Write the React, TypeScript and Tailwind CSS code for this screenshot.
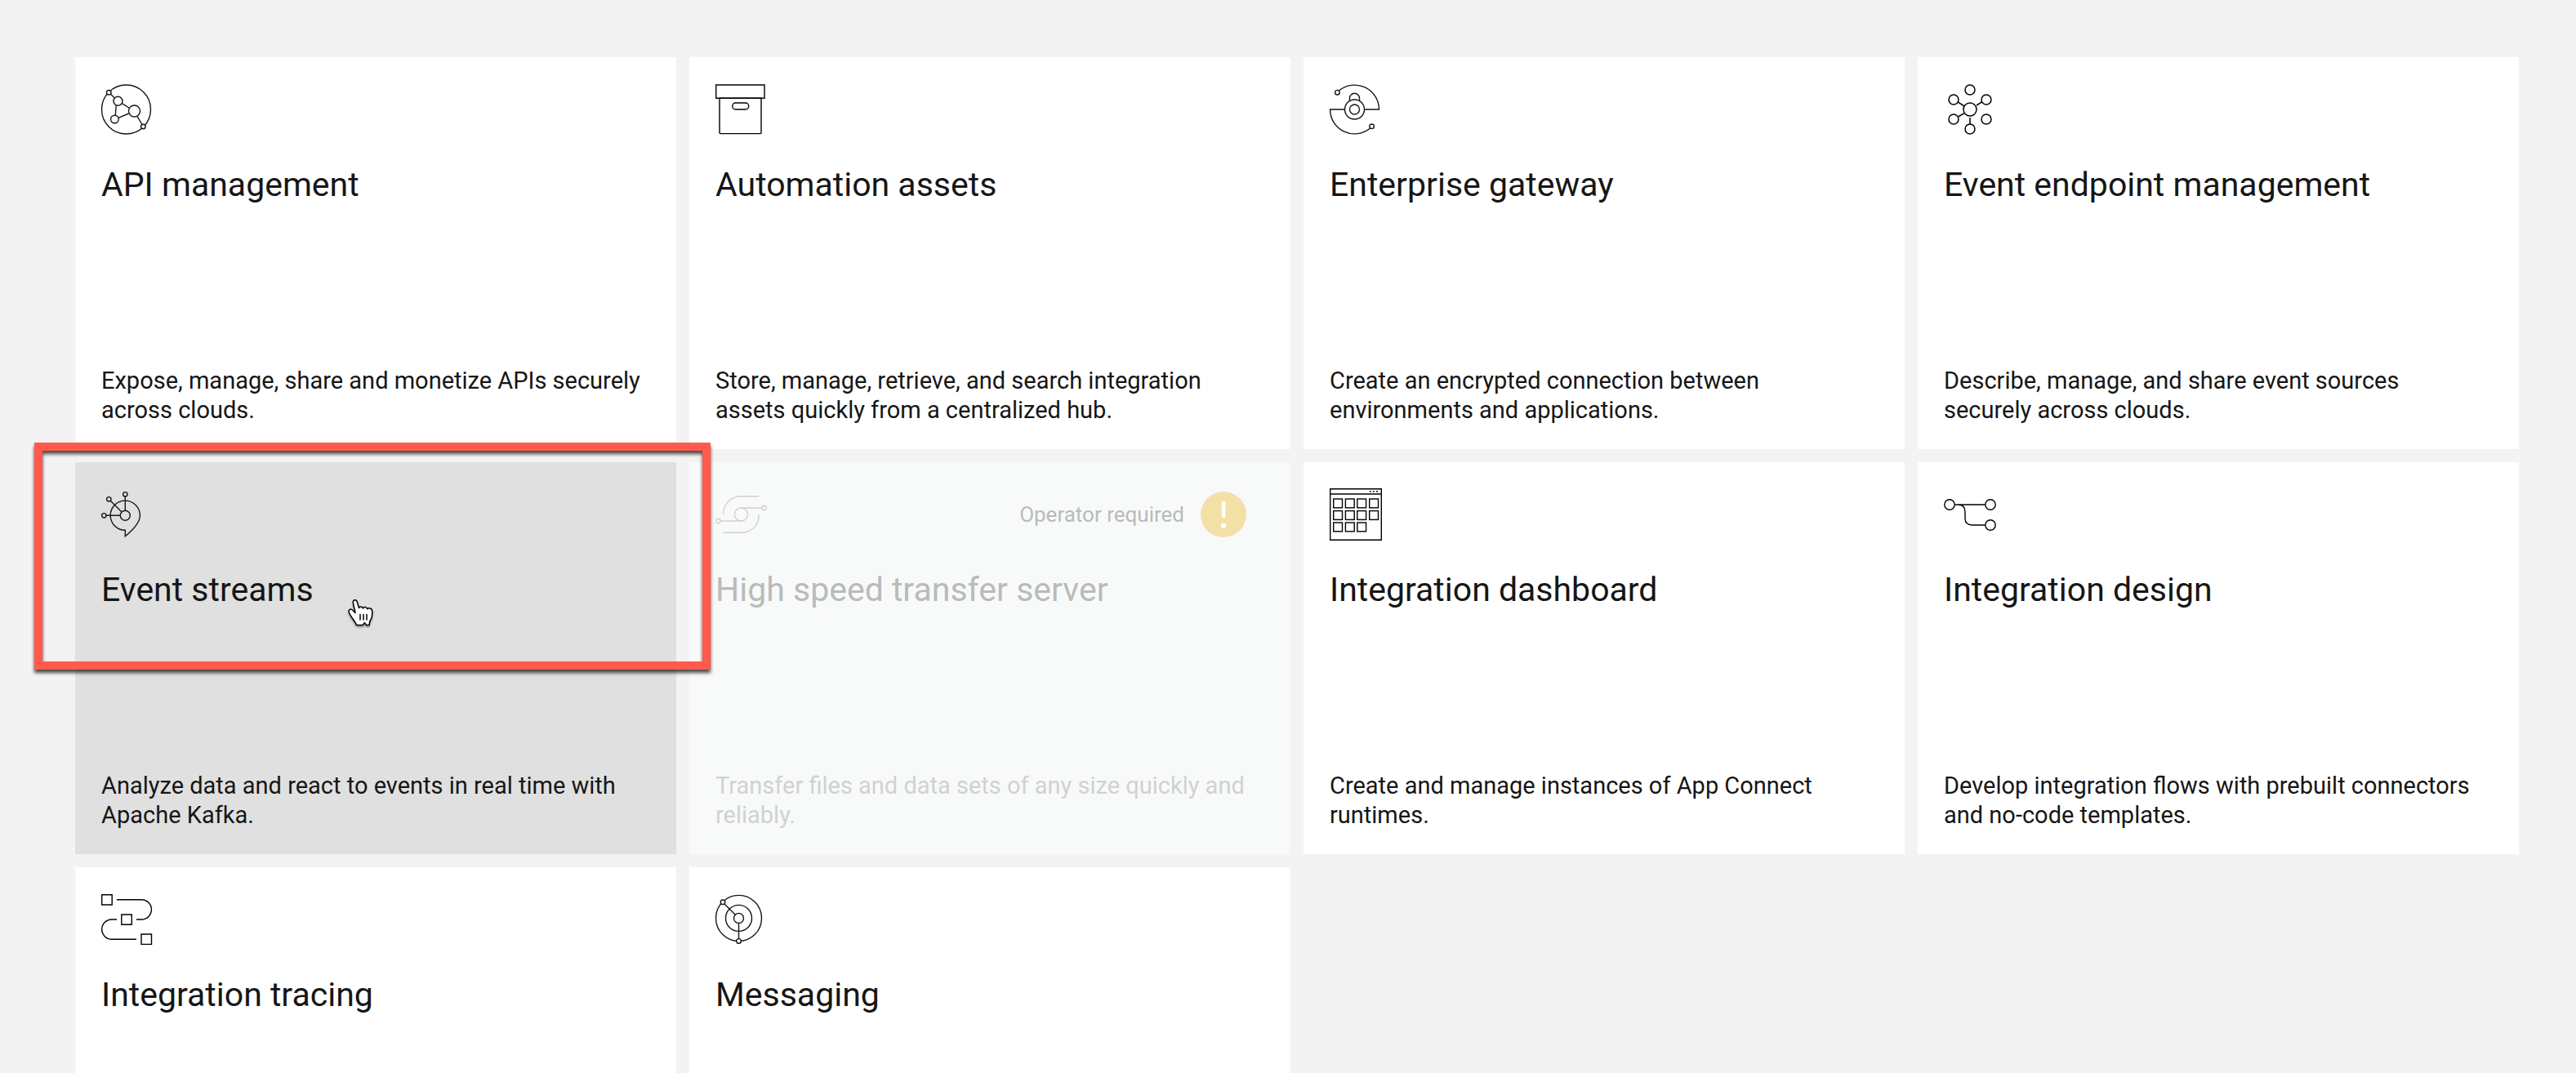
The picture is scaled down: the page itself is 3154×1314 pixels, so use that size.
import type { ReactNode } from "react";

function Icon({ children }: { children: ReactNode }) {
  return (
    <svg
      className="size-16 shrink-0 overflow-visible"
      viewBox="0 0 64 64"
      fill="none"
      stroke="currentColor"
      strokeWidth="1.4"
      aria-hidden="true"
    >
      {children}
    </svg>
  );
}

const ApiIcon = () => (
  <Icon>
    <circle cx="30.5" cy="32" r="30" />
    <path d="M11.5 13.3 16.3 18M25.3 24.7 34 30M18.2 27.3 17.3 39M21 42.3 33.6 37M44 40.3 50 50.5" />
    <g fill="#fff">
      <circle cx="9.3" cy="11.3" r="2.8" />
      <circle cx="51.3" cy="53" r="2.8" />
      <circle cx="20.5" cy="21.8" r="5.5" />
      <circle cx="40.5" cy="34" r="7" />
      <circle cx="16.4" cy="44" r="4.8" />
    </g>
  </Icon>
);

const BoxIcon = () => (
  <Icon>
    <g stroke="#000">
      <path d="M.7 2H60V18.3H.7z" />
      <path d="M5 18.3H56V60.5Q56 61.6 55 61.6H6Q5 61.6 5 60.5z" />
      <rect x="20.7" y="24" width="20" height="8" rx="4" />
    </g>
  </Icon>
);

const GatewayIcon = () => (
  <Icon>
    <path d="M11.4 9A30 30 0 0 1 60.5 32H42.5M49.6 55A30 30 0 0 1 .5 32H18.5" />
    <circle cx="9.4" cy="11.2" r="2.8" />
    <circle cx="51.6" cy="52.8" r="2.8" />
    <circle cx="30.5" cy="32" r="12" />
    <circle cx="30.5" cy="32" r="6" />
    <path d="M24.5 21.6V18.2A6 6 0 0 1 36.5 18.2V21.6" />
  </Icon>
);

const EndpointIcon = () => (
  <Icon>
    <g stroke="#000" strokeWidth="1.5">
      <circle cx="32" cy="32" r="8" />
      <circle cx="32" cy="8" r="6" />
      <circle cx="12" cy="20" r="6" />
      <circle cx="52" cy="20" r="6" />
      <circle cx="12" cy="44" r="6" />
      <circle cx="52" cy="44" r="6" />
      <circle cx="32" cy="56" r="6" />
      <path d="M17.5 23.2 25 28M40 27 47 22.7M17.5 41 25 36.6M32 42V50" />
    </g>
  </Icon>
);

const StreamsIcon = () => (
  <Icon>
    <path d="M29.3 51.3V58.8C36 53.3 47.4 42.6 47.4 33.3A18.1 18.1 0 1 0 29.3 51.3z" />
    <circle cx="29.3" cy="33.3" r="6" />
    <circle cx="29.3" cy="7.3" r="2.7" />
    <circle cx="9.3" cy="13.3" r="2.7" />
    <circle cx="3.3" cy="33.3" r="2.7" />
    <path d="M29.3 10V27.3M11.3 15.3 25 29M6 33.3H23.3" />
  </Icon>
);

const TransferIcon = () => (
  <Icon>
    <path d="M9.7 32C9.7 20 18 9.8 31 9.8H53.5M53.3 32C53.3 44 45 54.2 32 54.2H9.5" />
    <circle cx="31.4" cy="32" r="8" />
    <path d="M31.4 24H57M31.4 40H6.5" />
    <circle cx="59.6" cy="24" r="2.7" />
    <circle cx="3.4" cy="40" r="2.7" />
  </Icon>
);

const DASHBOARD_TILES = [
  [4.7, 13], [19.4, 13], [33.8, 13], [48.7, 13],
  [4.7, 27.6], [19.4, 27.6], [33.8, 27.6], [48.7, 27.6],
  [4.7, 42], [19.4, 42], [33.8, 42],
];

const DashboardIcon = () => (
  <Icon>
    <g stroke="#000">
      <path d="M.7.7H63.3V63.3H.7zM0 7H64" />
      {DASHBOARD_TILES.map(([x, y]) => (
        <rect key={`${x}-${y}`} x={x} y={y} width="10.8" height="10.8" />
      ))}
      <path d="M48.9 3.8h1.6M53 3.8h1.6M57.2 3.8h1.6" strokeWidth="1.8" />
    </g>
  </Icon>
);

const DesignIcon = () => (
  <Icon>
    <g stroke="#000">
      <circle cx="7" cy="20" r="6.2" />
      <circle cx="57" cy="20" r="6.2" />
      <circle cx="57" cy="45" r="6.2" />
      <path d="M13.3 20H50.7M17 20C23 20 26 23 26 28.5V36.5C26 42 29 45 34.5 45H50.7" />
    </g>
  </Icon>
);

const TracingIcon = () => (
  <Icon>
    <g stroke="#000">
      <path d="M.7 1.7H13.2V14H.7zM24.8 26H37.3V38.3H24.8zM49 50H61.5V62.4H49z" />
      <path d="M19 7.7H49.3A12.1 12.1 0 0 1 49.3 32H43M19 32H12.8A12.1 12.1 0 0 0 12.8 56.2H43" />
    </g>
  </Icon>
);

const MessagingIcon = () => (
  <Icon>
    <circle cx="28.5" cy="30.4" r="28" />
    <circle cx="28.5" cy="30.4" r="16" />
    <path d="M11 12.9 24.3 26.2M28.5 36.4V56" />
    <circle cx="28.5" cy="30.4" r="6" />
    <circle cx="9" cy="10.8" r="2.8" fill="#fff" />
    <circle cx="28.5" cy="58.4" r="2.8" fill="#fff" />
  </Icon>
);

const WarningIcon = () => (
  <svg className="size-16" viewBox="0 0 64 64" aria-hidden="true">
    <circle cx="32" cy="32" r="28" fill="#f4e0a6" />
    <path d="M29.8 16h4.5v20h-4.5z" fill="#fff" />
    <circle cx="32" cy="45.6" r="3.2" fill="#fff" />
  </svg>
);

function HandCursor() {
  return (
    <svg
      className="absolute left-[332px] top-[166px] h-10 w-9 drop-shadow-[0_2px_1px_rgba(0,0,0,0.35)]"
      viewBox="0 0 36 40"
      fill="#fff"
      stroke="#000"
      strokeWidth="1.5"
      strokeLinejoin="round"
      aria-hidden="true"
    >
      <path d="M12.6 33.4C11 29 6.5 25 4 19.500C1.500 15 4.800 12.500 8 15.500L11 18.500C10.500 14 8.500 9 8.300 5.500C8.300 2 12.600 2 13.300 5.200L15.500 12.500C16 10.300 20 10.300 20.500 13C21.500 10.800 25.300 11.200 25.700 13.800C27 12.200 31.500 12.600 31.700 16.500C32 22 31.500 25 29.500 27.500C28.300 29.500 28.500 31 28.200 33.400H24.600L22.300 30.600L20.300 33.400z" />
      <path d="M17 20v7.500M21 20v7.500M25 20v7.500" />
    </svg>
  );
}

type Tile = {
  title: string;
  description?: string;
  icon: ReactNode;
  state?: "hovered" | "disabled";
};

const TILES: Tile[] = [
  {
    title: "API management",
    description: "Expose, manage, share and monetize APIs securely across clouds.",
    icon: <ApiIcon />,
  },
  {
    title: "Automation assets",
    description:
      "Store, manage, retrieve, and search integration assets quickly from a centralized hub.",
    icon: <BoxIcon />,
  },
  {
    title: "Enterprise gateway",
    description: "Create an encrypted connection between environments and applications.",
    icon: <GatewayIcon />,
  },
  {
    title: "Event endpoint management",
    description: "Describe, manage, and share event sources securely across clouds.",
    icon: <EndpointIcon />,
  },
  {
    title: "Event streams",
    description: "Analyze data and react to events in real time with Apache Kafka.",
    icon: <StreamsIcon />,
    state: "hovered",
  },
  {
    title: "High speed transfer server",
    description: "Transfer files and data sets of any size quickly and reliably.",
    icon: <TransferIcon />,
    state: "disabled",
  },
  {
    title: "Integration dashboard",
    description: "Create and manage instances of App Connect runtimes.",
    icon: <DashboardIcon />,
  },
  {
    title: "Integration design",
    description:
      "Develop integration flows with prebuilt connectors and no-code templates.",
    icon: <DesignIcon />,
  },
  { title: "Integration tracing", icon: <TracingIcon /> },
  { title: "Messaging", icon: <MessagingIcon /> },
];

function TileBody({ title, description, icon, state }: Tile) {
  const disabled = state === "disabled";
  return (
    <>
      <div className={disabled ? "flex items-center justify-between pr-[18px] text-[#cfd1d0]" : "flex"}>
        {icon}
        {disabled && (
          <div className="flex items-center gap-4">
            <span className="text-[26px] leading-8 text-[#b9bbba]">Operator required</span>
            <WarningIcon />
          </div>
        )}
      </div>
      <h2 className={disabled ? "mt-9 text-[41px] leading-[48px] text-[#b9bbba]" : "mt-9 text-[41px] leading-[48px]"}>
        {title}
      </h2>
      <p className={disabled ? "mt-auto pr-2 text-[29px] leading-9 text-[#d0d2d1]" : "mt-auto pr-2 text-[29px] leading-9"}>
        {description}
      </p>
    </>
  );
}

const TILE = "flex min-h-[480px] flex-col px-8 pt-8 pb-[30px]";

export default function App() {
  return (
    <main className="h-screen overflow-hidden bg-[#f3f3f3] pt-[70px] pr-[70px] pl-[92px] font-['Roboto',sans-serif] text-[#161616]">
      <div className="grid grid-cols-4 gap-4">
        {TILES.map((tile) => {
          if (tile.state === "disabled") {
            return (
              <article key={tile.title} aria-disabled="true" className={`${TILE} bg-[#f8faf9]`}>
                <TileBody {...tile} />
              </article>
            );
          }
          if (tile.state === "hovered") {
            return (
              <div key={tile.title} className="relative z-10 flex">
                <a href="#" className={`${TILE} w-full bg-[#e0e0e0]`}>
                  <TileBody {...tile} />
                </a>
                <div className="pointer-events-none absolute -top-6 -right-[42px] -left-[50px] h-[278px] border-[10px] border-[#ff5a4b] drop-shadow-[0_4px_2px_rgba(0,0,0,0.7)]" />
                <HandCursor />
              </div>
            );
          }
          return (
            <a key={tile.title} href="#" className={`${TILE} bg-white`}>
              <TileBody {...tile} />
            </a>
          );
        })}
      </div>
    </main>
  );
}
